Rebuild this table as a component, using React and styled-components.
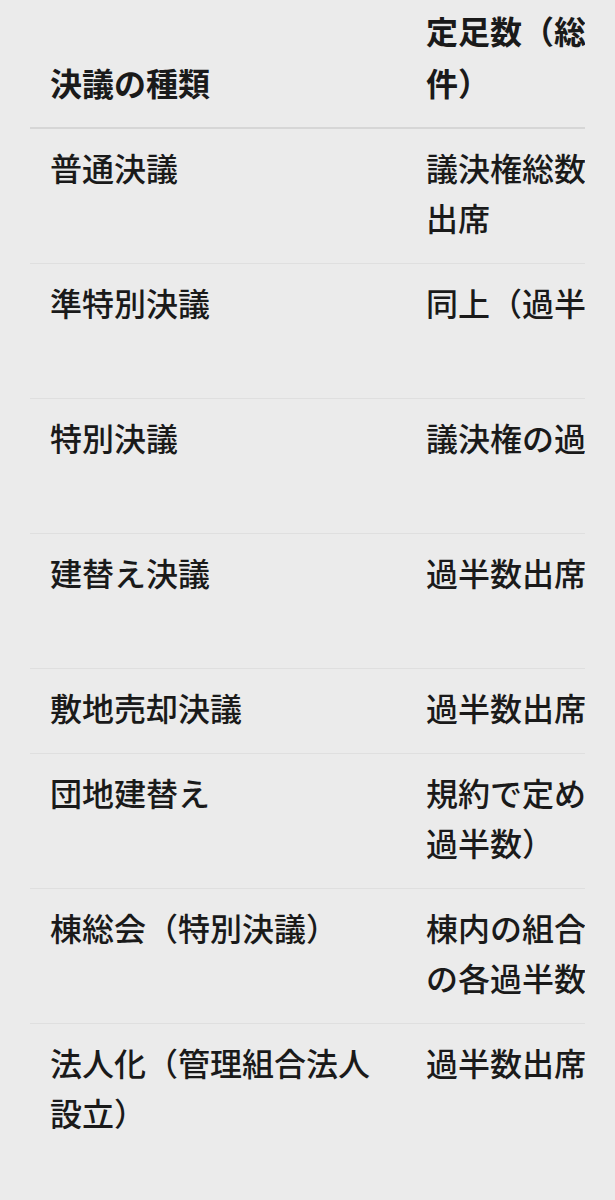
import React from "react";
import styled, { createGlobalStyle } from "styled-components";

const Global = createGlobalStyle`
  html, body {
    margin: 0;
    padding: 0;
    background: #ebebeb;
  }
  body {
    font-family: "Noto Sans CJK JP", "Noto Sans", sans-serif;
    color: #1a1a1a;
  }
`;

const Page = styled.div`
  padding: 0 30px;
`;

const Scroller = styled.div`
  width: 555px;
  overflow: hidden;
`;

const Table = styled.table`
  border-collapse: collapse;
  table-layout: fixed;
  width: 1060px;
  font-size: 32px;
  line-height: 50px;
`;

const Col = styled.col`
  width: ${(p) => p.$w}px;
`;

const Th = styled.th`
  text-align: left;
  font-weight: 700;
  vertical-align: bottom;
  padding: 4px 20px 19px;
  line-height: 52px;
  border-bottom: 2px solid #d6d6d6;
`;

const Td = styled.td`
  vertical-align: top;
  font-weight: 500;
  padding: 13px 20px 21px;
  border-bottom: ${(p) => (p.$last ? "none" : "1px solid #dfdfdf")};
  word-break: break-all;
`;

const rows = [
  ["普通決議", "議決権総数の過半数出席", "出席組合員の議決権の過半数"],
  ["準特別決議", "同上（過半数出席）", "出席組合員の議決権の3分の2以上"],
  ["特別決議", "議決権の過半数出席", "組合員総数及び議決権総数の4分の3以上"],
  ["建替え決議", "過半数出席", "組合員総数及び議決権総数の5分の4以上"],
  ["敷地売却決議", "過半数出席", "5分の4以上"],
  ["団地建替え", "規約で定める（原則過半数）", "各棟の3分の2以上"],
  ["棟総会（特別決議）", "棟内の組合員議決権の各過半数出席", "棟内の4分の3以上"],
  ["法人化（管理組合法人設立）", "過半数出席", "4分の3以上"],
];

export default function App() {
  return (
    <>
      <Global />
      <Page>
        <Scroller>
          <Table>
            <colgroup>
              <Col $w={376} />
              <Col $w={340} />
              <Col $w={344} />
            </colgroup>
            <thead>
              <tr>
                <Th>決議の種類</Th>
                <Th>定足数（総会成立要件）</Th>
                <Th>決議要件</Th>
              </tr>
            </thead>
            <tbody>
              {rows.map((r, i) => (
                <tr key={r[0]}>
                  {r.map((c, j) => (
                    <Td key={j} $last={i === rows.length - 1}>
                      {c}
                    </Td>
                  ))}
                </tr>
              ))}
            </tbody>
          </Table>
        </Scroller>
      </Page>
    </>
  );
}
